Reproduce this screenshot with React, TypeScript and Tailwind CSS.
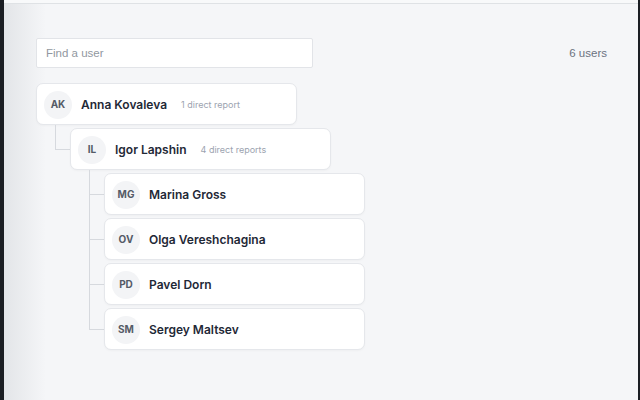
type Person = {
  initials: string;
  name: string;
  children?: Person[];
};

const tree: Person = {
  initials: "AK",
  name: "Anna Kovaleva",
  children: [
    {
      initials: "IL",
      name: "Igor Lapshin",
      children: [
        { initials: "MG", name: "Marina Gross" },
        { initials: "OV", name: "Olga Vereshchagina" },
        { initials: "PD", name: "Pavel Dorn" },
        { initials: "SM", name: "Sergey Maltsev" },
      ],
    },
  ],
};

function UserCard({ person }: { person: Person }) {
  const count = person.children?.length ?? 0;
  return (
    <div className="flex h-[42px] w-[261px] items-center rounded-[7px] border border-[#e5e7eb] bg-white pl-[7px] pt-[1px] shadow-[0_1px_2px_rgba(0,0,0,0.03)]">
      <div className="flex h-[28px] w-[28px] items-center justify-center rounded-full bg-[#f3f4f6] text-[10px] font-bold text-[#555b66]">
        {person.initials}
      </div>
      <span className="ml-[9px] text-[12px] font-semibold text-[#1f2937]">{person.name}</span>
      {count > 0 && (
        <span className="ml-[14px] text-[9px] text-[#9ca3af]">
          {count} direct {count === 1 ? "report" : "reports"}
        </span>
      )}
    </div>
  );
}

function TreeNode({ person }: { person: Person }) {
  const kids = person.children ?? [];
  return (
    <div className="flex flex-col">
      <UserCard person={person} />
      {kids.map((kid, i) => {
        const last = i === kids.length - 1;
        return (
          <div key={kid.initials} className="flex">
            {/* elbow connector */}
            <div className="flex w-[34px] shrink-0 flex-col">
              <div className="ml-[19px] h-[25px] border-b border-l border-[#d6d9de]" />
              {!last && <div className="ml-[19px] flex-1 border-l border-[#d6d9de]" />}
            </div>
            <div className="pt-[3px]">
              <TreeNode person={kid} />
            </div>
          </div>
        );
      })}
    </div>
  );
}

export default function App() {
  return (
    <div className="flex h-[400px] w-[640px] bg-[#1b1e23] font-['Inter',sans-serif]">
      <div className="w-[4px] shrink-0" />
      <div className="flex flex-1 flex-col bg-[linear-gradient(to_right,#e3e5e8,#f5f6f8_42px)]">
        <div className="h-[4px] shrink-0 border-b border-[#dfe2e5] bg-[#f8f9fa]" />
        <div className="flex flex-col pl-[32px] pr-[31px] pt-[34px]">
          <div className="flex items-center justify-between">
            <div className="flex h-[30px] w-[277px] items-center rounded-[2px] border border-[#e2e4e8] bg-white pl-[9px] pt-[1px] font-['Liberation_Sans',Arial,sans-serif] text-[11.5px] text-[#9197a0]">
              Find a user
            </div>
            <span className="pt-[1px] font-['Liberation_Sans',Arial,sans-serif] text-[11.5px] text-[#6b7280]">6 users</span>
          </div>
          <div className="mt-[15px]">
            <TreeNode person={tree} />
          </div>
        </div>
      </div>
      <div className="w-[2px] shrink-0" />
    </div>
  );
}
